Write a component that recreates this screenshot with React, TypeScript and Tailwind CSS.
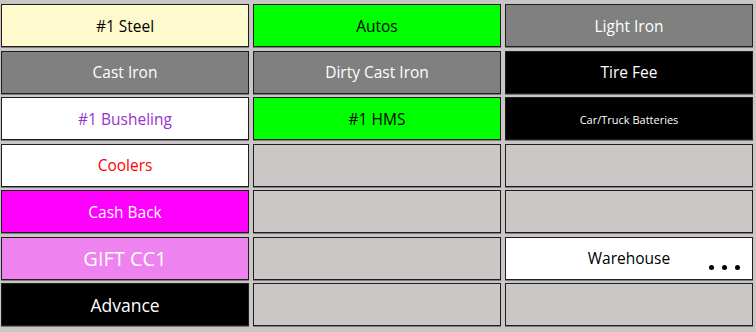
import React from "react";

type Tile = {
  label?: string;
  bg: string;
  fg?: string;
  size?: string;
  more?: boolean;
};

const tiles: Tile[] = [
  { label: "#1 Steel", bg: "bg-[#fffacd]", fg: "text-black" },
  { label: "Autos", bg: "bg-[#00ff00]", fg: "text-black" },
  { label: "Light Iron", bg: "bg-[#808080]", fg: "text-white" },
  { label: "Cast Iron", bg: "bg-[#808080]", fg: "text-white" },
  { label: "Dirty Cast Iron", bg: "bg-[#808080]", fg: "text-white" },
  { label: "Tire Fee", bg: "bg-black", fg: "text-white" },
  { label: "#1 Busheling", bg: "bg-white", fg: "text-[#9932cc]" },
  { label: "#1 HMS", bg: "bg-[#00ff00]", fg: "text-black" },
  { label: "Car/Truck Batteries", bg: "bg-black", fg: "text-white", size: "text-[11px]" },
  { label: "Coolers", bg: "bg-white", fg: "text-[#ff0000]" },
  { bg: "bg-[#cbc7c6]" },
  { bg: "bg-[#cbc7c6]" },
  { label: "Cash Back", bg: "bg-[#ff00ff]", fg: "text-white" },
  { bg: "bg-[#cbc7c6]" },
  { bg: "bg-[#cbc7c6]" },
  { label: "GIFT CC1", bg: "bg-[#ee82ee]", fg: "text-white", size: "text-[20px]" },
  { bg: "bg-[#cbc7c6]" },
  { label: "Warehouse", bg: "bg-white", fg: "text-black", more: true },
  { label: "Advance", bg: "bg-black", fg: "text-white", size: "text-[17.5px]" },
  { bg: "bg-[#cbc7c6]" },
  { bg: "bg-[#cbc7c6]" },
];

export default function App() {
  return (
    <div
      className="h-[332px] w-[756px] overflow-hidden bg-[#c9c6c5] pl-[1px] pr-[3px] pt-[4px]"
      style={{ fontFamily: '"Open Sans", "Noto Sans", sans-serif' }}
    >
      <div className="grid grid-cols-[248px_248px_248px] grid-rows-[repeat(7,43px)] gap-x-[4px] gap-y-[3.5px]">
        {tiles.map((t, i) => (
          <div
            key={i}
            className={`relative flex items-center justify-center border border-[#1e1e1e] pt-[2px] shadow-[0_1px_0_#7c7c7c] ${t.bg}`}
          >
            {t.label && (
              <span className={`${t.fg} ${t.size ?? "text-[15.5px]"} leading-none`}>
                {t.label}
              </span>
            )}
            {t.more && (
              <div className="absolute bottom-[9px] right-[12px] flex gap-[8px]">
                <span className="h-[5px] w-[5px] rounded-full bg-black" />
                <span className="h-[5px] w-[5px] rounded-full bg-black" />
                <span className="h-[5px] w-[5px] rounded-full bg-black" />
              </div>
            )}
          </div>
        ))}
      </div>
    </div>
  );
}
